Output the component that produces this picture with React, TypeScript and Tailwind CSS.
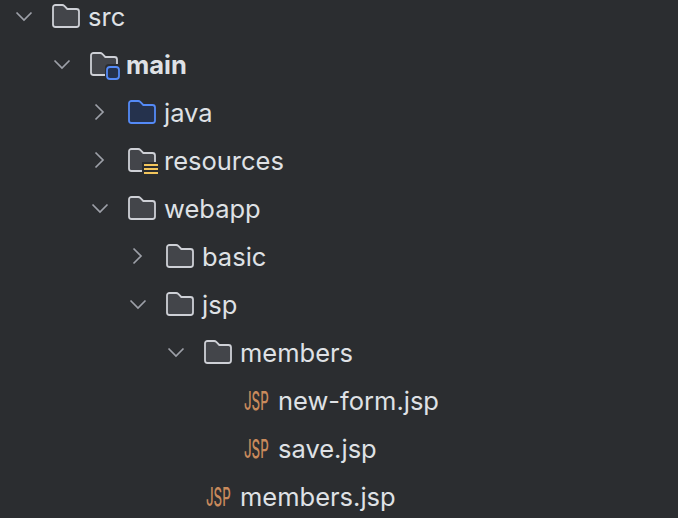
import React from 'react';

type Kind = 'folder' | 'module' | 'source' | 'resources' | 'jsp';

type Row = {
  name: string;
  kind: Kind;
  indent: string;
  open?: boolean;
  bold?: boolean;
};

const rows: Row[] = [
  { name: 'src', kind: 'folder', indent: 'pl-[14px]', open: true },
  { name: 'main', kind: 'module', indent: 'pl-[52px]', open: true, bold: true },
  { name: 'java', kind: 'source', indent: 'pl-[90px]', open: false },
  { name: 'resources', kind: 'resources', indent: 'pl-[90px]', open: false },
  { name: 'webapp', kind: 'folder', indent: 'pl-[90px]', open: true },
  { name: 'basic', kind: 'folder', indent: 'pl-[128px]', open: false },
  { name: 'jsp', kind: 'folder', indent: 'pl-[128px]', open: true },
  { name: 'members', kind: 'folder', indent: 'pl-[166px]', open: true },
  { name: 'new-form.jsp', kind: 'jsp', indent: 'pl-[244px]' },
  { name: 'save.jsp', kind: 'jsp', indent: 'pl-[244px]' },
  { name: 'members.jsp', kind: 'jsp', indent: 'pl-[206px]' },
];

const folderPath =
  'M4 1H10.2C11 1 11.7 1.3 12.3 1.9L15.3 5H24.5A2.5 2.5 0 0 1 27 7.5V20.5A2.5 2.5 0 0 1 24.5 23H3.5A2.5 2.5 0 0 1 1 20.5V3.5A2.5 2.5 0 0 1 3.5 1Z';

const Folder = ({ kind }: { kind: Kind }) => {
  const blue = kind === 'source';
  return (
    <svg width="28" height="24" viewBox="0 0 28 24" fill="none" className="block overflow-visible">
      <path d={folderPath} fill={blue ? '#25324d' : '#43454a'} stroke={blue ? '#548af7' : '#ced0d6'} strokeWidth="1.8" />
      {kind === 'module' && (
        <>
          <rect x="15" y="12" width="17" height="17" rx="4" fill="#2b2d30" />
          <rect x="17" y="15" width="12" height="12" rx="3" fill="#25324d" stroke="#548af7" strokeWidth="1.8" />
        </>
      )}
      {kind === 'resources' && (
        <>
          <rect x="14" y="14" width="17" height="13" fill="#2b2d30" />
          <rect x="16" y="16" width="14" height="2" fill="#f2c55c" />
          <rect x="16" y="20" width="14" height="2" fill="#f2c55c" />
          <rect x="16" y="24" width="14" height="2" fill="#f2c55c" />
        </>
      )}
    </svg>
  );
};

const Chevron = ({ open }: { open: boolean }) => (
  <svg width="20" height="20" viewBox="0 0 20 20" fill="none" className="block">
    <path
      d={open ? 'M2.5 6.5L10 14L17.5 6.5' : 'M5.5 2.5L13 10L5.5 17.5'}
      stroke="#9da0a8"
      strokeWidth="1.7"
    />
  </svg>
);

const App: React.FC = () => {
  return (
    <div className="h-[518px] w-[678px] overflow-hidden bg-[#2b2d30] font-['Inter',sans-serif] text-[#dfe1e5]">
      <ul className="-mt-[8px]">
        {rows.map((row) => (
          <li key={row.name} className={`flex h-12 items-center ${row.indent}`}>
            {row.kind === 'jsp' ? (
              <>
                <span className="flex h-6 w-[24px] origin-left scale-x-[0.53] items-center whitespace-nowrap pt-[4px] text-[25px] font-medium text-[#c98a5c]">
                  JSP
                </span>
                <span className="ml-[10px] pt-[2px] text-[25.5px]">{row.name}</span>
              </>
            ) : (
              <>
                <span className="flex w-[28px] justify-start">
                  <Chevron open={!!row.open} />
                </span>
                <span className="ml-[10px]">
                  <Folder kind={row.kind} />
                </span>
                <span className={`ml-[8px] pt-[2px] text-[25.5px] ${row.bold ? 'font-bold' : ''}`}>{row.name}</span>
              </>
            )}
          </li>
        ))}
      </ul>
    </div>
  );
};

export default App;
